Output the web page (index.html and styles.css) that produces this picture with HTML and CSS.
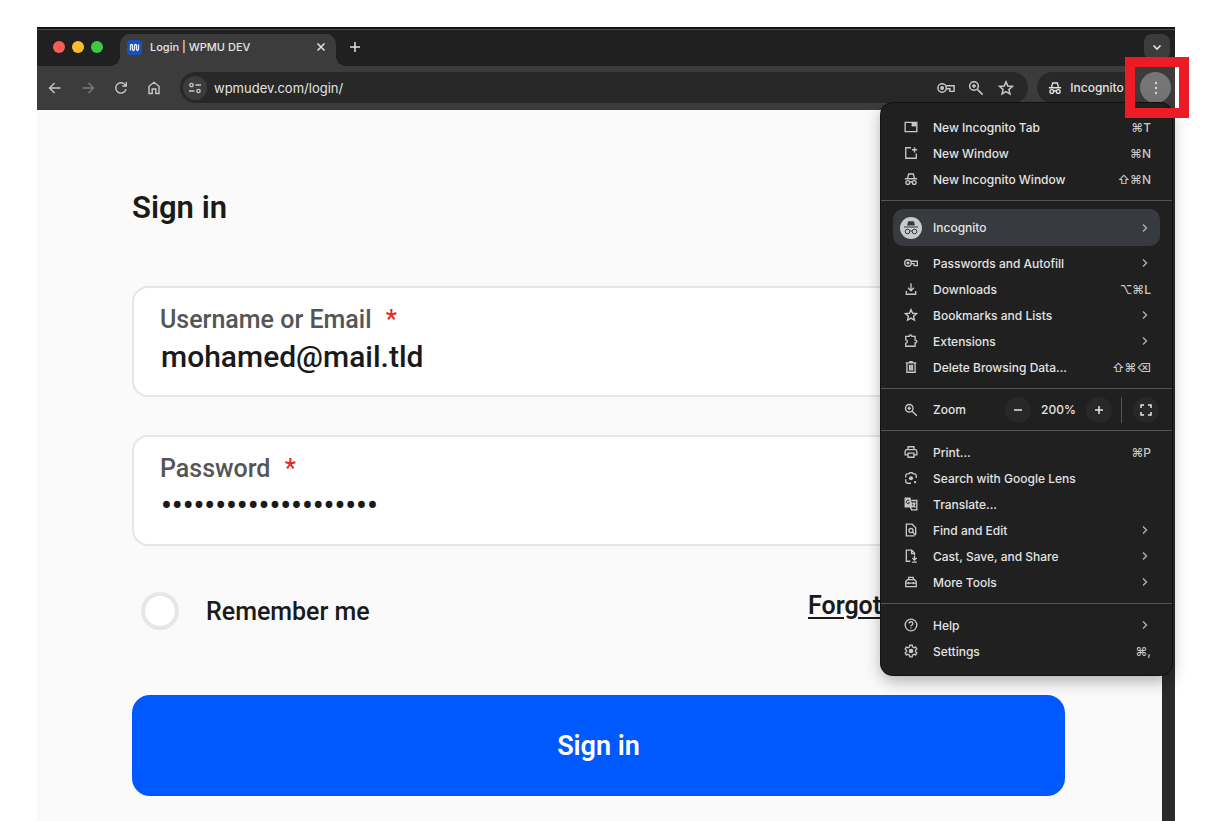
FILE: index.html
```html
<!DOCTYPE html>
<html lang="en">
<head>
<meta charset="utf-8">
<title>Login | WPMU DEV</title>
<link rel="stylesheet" href="styles.css">
</head>
<body>
<svg class="defs" aria-hidden="true">
  <symbol id="i-incognito" viewBox="0 0 24 24"><path d="M6 11 8 3.500h8L18 11M1.500 11.500h21"/><circle cx="6.500" cy="18" r="3.200"/><circle cx="17.500" cy="18" r="3.200"/><path d="M9.700 17.500q2.300-1.500 4.600 0"/></symbol>
  <symbol id="i-key" viewBox="0 0 24 24"><circle cx="6.800" cy="12" r="5.600"/><circle class="solid" cx="6.800" cy="12" r="2.600"/><path d="M12 9h10.800v7.500h-5.600V13h-4.800"/></symbol>
  <symbol id="i-zoom" viewBox="0 0 24 24"><circle cx="9" cy="9" r="6.500"/><path d="m14 14 8 8M9 6v6M6 9h6"/></symbol>
  <symbol id="i-star" viewBox="0 0 24 24"><path d="m12 2.800 2.700 6.200 6.800.6-5.100 4.500 1.500 6.700L12 17.300l-5.900 3.500 1.500-6.700-5.100-4.500 6.800-.6z"/></symbol>
  <symbol id="i-chevron" viewBox="0 0 12 12"><path d="m4 2.500 3.500 3.500L4 9.500"/></symbol>
</svg>

<div class="window">
  <header class="tabstrip">
    <div class="lights"><span class="light red"></span><span class="light yellow"></span><span class="light green"></span></div>
    <div class="tab">
      <svg class="favicon" viewBox="0 0 15 15"><rect width="15" height="15" rx="3" fill="#1b50b8"/><path d="M3.500 10.500V6q0-1.500 1-1.500t1 1.500v3q0 1.500 1 1.500t1-1.500V6q0-1.500 1-1.500t1 1.500v3q0 1.500 1 1.500t1-1.500V4.500" fill="none" stroke="#e8eefc" stroke-width="1.300"/></svg>
      <span class="tab-title">Login | WPMU DEV</span>
      <button class="plain" aria-label="Close tab"><svg class="icon s12" viewBox="0 0 12 12"><path d="m2.500 2.500 7 7m0-7-7 7" stroke-width="1.500"/></svg></button>
    </div>
    <button class="plain new-tab" aria-label="New tab"><svg class="icon s12" viewBox="0 0 12 12"><path d="M6 1v10M1 6h10"/></svg></button>
    <button class="plain tab-search" aria-label="Search tabs"><svg class="icon s12" viewBox="0 0 12 12"><path d="m2.500 4.500 3.500 3.500 3.500-3.500" stroke-width="1.700"/></svg></button>
  </header>

  <nav class="toolbar">
    <button class="plain nav" aria-label="Back"><svg class="icon s16" viewBox="0 0 16 16"><path d="M13.500 8H3M7.500 3 2.500 8l5 5"/></svg></button>
    <button class="plain nav dim" aria-label="Forward"><svg class="icon s16" viewBox="0 0 16 16"><path d="M2.500 8H13M8.500 3l5 5-5 5"/></svg></button>
    <button class="plain nav" aria-label="Reload"><svg class="icon s16" viewBox="0 0 16 16"><path d="M13 9.200A5.200 5.200 0 1 1 11.800 4.400L13 5.600M13.300 2v4H9.300"/></svg></button>
    <button class="plain nav" aria-label="Home"><svg class="icon s16" viewBox="0 0 16 16"><path d="M3 13.500V6.300l5-4 5 4v7.200H9.800V9H6.200v4.500z"/></svg></button>
    <div class="omnibox">
      <button class="plain site-info" aria-label="Site information"><svg class="icon s14" viewBox="0 0 14 14"><circle cx="3.500" cy="4" r="1.700"/><path d="M7.500 4H13M1 10h5.500"/><circle cx="10.500" cy="10" r="1.700"/></svg></button>
      <input class="url" type="text" aria-label="Address" value="wpmudev.com/login/">
      <button class="plain action" aria-label="Passwords"><svg class="icon s18"><use href="#i-key"/></svg></button>
      <button class="plain action" aria-label="Zoom level"><svg class="icon s16"><use href="#i-zoom"/></svg></button>
      <button class="plain action" aria-label="Bookmark this tab"><svg class="icon s16"><use href="#i-star"/></svg></button>
    </div>
    <button class="plain profile"><svg class="icon s14"><use href="#i-incognito"/></svg>Incognito</button>
    <div class="menu-anchor">
      <button class="plain kebab" aria-label="Customize and control"><svg class="dots" viewBox="0 0 16 16"><circle cx="8" cy="3" r="1.200"/><circle cx="8" cy="8" r="1.200"/><circle cx="8" cy="13" r="1.200"/></svg></button>

      <div class="menu">
        <button class="item"><svg class="icon s14" viewBox="0 0 24 24"><path d="M2 4h20v16H2z"/><path class="solid" d="M13 5h8v6h-8z"/></svg><span>New Incognito Tab</span><kbd>⌘T</kbd></button>
        <button class="item"><svg class="icon s14" viewBox="0 0 24 24"><path d="M12 3H3v18h18v-8M18 2v9M13.500 6.500h9"/></svg><span>New Window</span><kbd>⌘N</kbd></button>
        <button class="item"><svg class="icon s14"><use href="#i-incognito"/></svg><span>New Incognito Window</span><kbd>⇧⌘N</kbd></button>
        <hr>
        <button class="item account"><svg class="avatar" viewBox="0 0 22 22"><circle cx="11" cy="11" r="11" fill="#c7c9ca"/><path d="M7 8.500 8.200 4.300h5.600L15 8.500z" fill="#36393c"/><g fill="none" stroke="#36393c"><path d="M4 10h14"/><circle cx="7.500" cy="14.500" r="2.300"/><circle cx="14.500" cy="14.500" r="2.300"/><path d="M9.800 14.200q1.200-.7 2.400 0"/></g></svg><span>Incognito</span><svg class="icon chevron"><use href="#i-chevron"/></svg></button>
        <button class="item"><svg class="icon s14"><use href="#i-key"/></svg><span>Passwords and Autofill</span><svg class="icon chevron"><use href="#i-chevron"/></svg></button>
        <button class="item"><svg class="icon s14" viewBox="0 0 24 24"><path d="M12 2v13M7 10l5 5 5-5M4 15.500V21h16v-5.500"/></svg><span>Downloads</span><kbd>⌥⌘L</kbd></button>
        <button class="item"><svg class="icon s14"><use href="#i-star"/></svg><span>Bookmarks and Lists</span><svg class="icon chevron"><use href="#i-chevron"/></svg></button>
        <button class="item"><svg class="icon s14" viewBox="0 0 24 24"><path d="M3 4h6q0-2.500 2.200-2.500T13.500 4H19v6.500q3 0 3 2.500t-3 2.500V21H3v-5q2.800-.5 2.800-3T3 10z"/></svg><span>Extensions</span><svg class="icon chevron"><use href="#i-chevron"/></svg></button>
        <button class="item"><svg class="icon s14" viewBox="0 0 24 24"><path d="M3 5h18M9 3h6M5 5v16h14V5M9.500 8v10M12 8v10M14.500 8v10"/></svg><span>Delete Browsing Data...</span><kbd>⇧⌘⌫</kbd></button>
        <hr>
        <div class="zoom-row">
          <svg class="icon s14"><use href="#i-zoom"/></svg>
          <span class="zoom-label">Zoom</span>
          <button class="plain round" aria-label="Zoom out"><svg class="icon s12" viewBox="0 0 12 12"><path d="M2 6h8"/></svg></button>
          <span class="zoom-value">200%</span>
          <button class="plain round" aria-label="Zoom in"><svg class="icon s12" viewBox="0 0 12 12"><path d="M2 6h8M6 2v8"/></svg></button>
          <span class="divider"></span>
          <button class="plain round" aria-label="Full screen"><svg class="icon s12" viewBox="0 0 12 12"><path d="M1 4V1h3M8 1h3v3M11 8v3H8M4 11H1V8"/></svg></button>
        </div>
        <hr>
        <button class="item"><svg class="icon s14" viewBox="0 0 24 24"><path d="M7 8V3h10v5M7 17H2V11q0-3 3-3h14q3 0 3 3v6h-5M7 14h10v7H7z"/></svg><span>Print...</span><kbd>⌘P</kbd></button>
        <button class="item"><svg class="icon s14" viewBox="0 0 24 24"><path d="M3 11V8q0-3 3-3h2l2-2h4l2 2h2q3 0 3 3v4M3 14v3q0 4 4 4h5"/><circle class="solid" cx="12" cy="12.500" r="3.500"/><circle class="solid" cx="19" cy="19" r="2"/></svg><span>Search with Google Lens</span></button>
        <button class="item"><svg class="icon s14" viewBox="0 0 24 24"><path class="solid" d="M1 1h10l4.500 17H1z"/><path d="M13 6h9v16H13l-2-5M14 11h6M17 9v2M19 11q-1 4-4 6M15.500 13l4 5"/><path class="cut" d="M9 6.500A3 3 0 1 0 9.500 10H7"/></svg><span>Translate...</span></button>
        <button class="item"><svg class="icon s14" viewBox="0 0 24 24"><path d="M20 20V8l-6-6H4v20h14"/><circle cx="12" cy="13" r="3.500"/><path d="m14.500 15.500 5.500 5.500"/></svg><span>Find and Edit</span><svg class="icon chevron"><use href="#i-chevron"/></svg></button>
        <button class="item"><svg class="icon s14" viewBox="0 0 24 24"><path d="M11 21H4V2h9l5 5v4M13 2v6h5M18 12v7M14.500 15.500 18 19l3.500-3.500M14 22.500h8"/></svg><span>Cast, Save, and Share</span><svg class="icon chevron"><use href="#i-chevron"/></svg></button>
        <button class="item"><svg class="icon s14" viewBox="0 0 24 24"><path d="M8 8V4h8v4M3 20v-9l3-3h12l3 3v9zM3 14h18M8 12v4M16 12v4"/></svg><span>More Tools</span><svg class="icon chevron"><use href="#i-chevron"/></svg></button>
        <hr>
        <button class="item"><svg class="icon s14" viewBox="0 0 24 24"><circle cx="12" cy="12" r="10"/><path d="M8.800 9.500q0-3 3.200-3t3.200 2.800q0 1.500-1.700 2.700T12 14.500M12 16.200v2"/></svg><span>Help</span><svg class="icon chevron"><use href="#i-chevron"/></svg></button>
        <button class="item"><svg class="icon s14" viewBox="0 0 24 24"><path d="m10 2-.6 3-2.500 1.400-2.900-1-2 3.500 2.300 2v2.300L2 15.100l2 3.500 2.900-1L9.400 19l.6 3h4l.6-3 2.500-1.400 2.900 1 2-3.500-2.300-1.900v-2.300l2.300-2-2-3.500-2.900 1L14.600 5 14 2z"/><circle class="solid" cx="12" cy="12" r="4"/></svg><span>Settings</span><kbd>⌘,</kbd></button>
      </div>
      <div class="highlight"></div>
    </div>
  </nav>

  <div class="viewport">
    <main class="page">
      <h1>Sign in</h1>
      <form>
        <div class="field">
          <label for="user">Username or Email <span class="required">*</span></label>
          <input id="user" type="text" value="mohamed@mail.tld">
        </div>
        <div class="field">
          <label for="pass">Password <span class="required">*</span></label>
          <input id="pass" type="password" value="abcdefghijklmnopqrst">
        </div>
        <div class="options">
          <label class="remember"><input type="checkbox">Remember me</label>
          <a class="forgot" href="#">Forgot</a>
        </div>
        <button class="submit" type="button">Sign in</button>
      </form>
    </main>
    <div class="scrollbar"></div>
  </div>
</div>
</body>
</html>
```
FILE: styles.css
```css
* { box-sizing: border-box; }

body {
  margin: 0;
  min-height: 100vh;
  display: flex;
  padding: 27px 45px 0 37px;
  background: #fff;
  font-family: Inter, "Liberation Sans", sans-serif;
}

button, input { font: inherit; color: inherit; }
.defs { position: absolute; width: 0; height: 0; }

.icon {
  flex: none;
  fill: none;
  stroke: currentColor;
  stroke-width: 2.3;
  overflow: visible;
}
.icon[viewBox="0 0 16 16"] { stroke-width: 1.4; }
.icon[viewBox="0 0 14 14"] { stroke-width: 1.3; }
.icon[viewBox="0 0 12 12"] { stroke-width: 1.5; }
.s12 { width: 12px; height: 12px; }
.s14 { width: 14px; height: 14px; }
.s16 { width: 16px; height: 16px; }
.s18 { width: 18px; height: 18px; stroke-width: 1.9; }
.solid { fill: currentColor; stroke: none; }
.cut { stroke: #202020; stroke-width: 1.6; }

.plain {
  display: flex;
  align-items: center;
  justify-content: center;
  padding: 0;
  border: 0;
  background: none;
}

.window {
  flex: 1;
  min-width: 0;
  display: flex;
  flex-direction: column;
  color: #e3e3e3;
}

/* Tab strip */
.tabstrip {
  display: flex;
  align-items: flex-end;
  height: 39px;
  padding-right: 5px;
  background: #202020;
  border-top: 2px solid #151613;
  box-shadow: inset 0 1px #4b4b4b;
}
.lights { display: flex; gap: 7px; padding: 0 17px 13px 16px; }
.light { width: 12px; height: 12px; border-radius: 50%; }
.red { background: #fa5d56; }
.yellow { background: #fbbd2e; }
.green { background: #3fc844; }
.tab {
  position: relative;
  display: flex;
  align-items: center;
  width: 216px;
  height: 32px;
  padding: 0 9px 6px 7px;
  border-radius: 10px 10px 0 0;
  background: #3c3c3c;
}
.tab::before, .tab::after {
  content: "";
  position: absolute;
  bottom: 0;
  width: 10px;
  height: 10px;
}
.tab::before { right: 100%; background: radial-gradient(circle at 0 0, transparent 10px, #3c3c3c 10px); }
.tab::after { left: 100%; background: radial-gradient(circle at 100% 0, transparent 10px, #3c3c3c 10px); }
.favicon { width: 15px; height: 15px; margin-right: 8px; }
.tab-title { flex: 1; font-size: 11px; font-weight: 500; white-space: nowrap; }
.new-tab { height: 26px; width: 26px; margin: 0 auto 6px 6px; }
.tab-search { height: 26px; width: 26px; margin-bottom: 6px; border-radius: 8px; background: #3c3c3c; }

/* Toolbar */
.toolbar {
  display: flex;
  align-items: center;
  height: 44px;
  padding: 0 4px 1px 1px;
  background: #3c3c3c;
  color: #c7c7c7;
}
.nav { width: 33px; height: 31px; }
.dim { color: #7c7c7c; }
.omnibox {
  flex: 1;
  display: flex;
  align-items: center;
  height: 31px;
  margin: 0 9px 0 10px;
  padding: 0 7px 0 3px;
  border-radius: 16px;
  background: #282828;
}
.site-info { width: 24px; height: 24px; border-radius: 50%; background: #3c3c3c; }
.url {
  flex: 1;
  min-width: 0;
  padding: 0 0 0 7px;
  border: 0;
  background: none;
  color: #e3e3e3;
  font-size: 13px;
}
.action { width: 30px; height: 30px; }
.profile {
  width: 94px;
  height: 31px;
  gap: 8px;
  margin-right: 9px;
  border-radius: 16px 0 0 16px;
  padding-left: 4px;
  background: #282828;
  color: #e3e3e3;
  font-size: 12px;
  font-weight: 500;
}
.menu-anchor { position: relative; }
.kebab { width: 31px; height: 31px; border-radius: 50%; background: #757575; }
.dots { width: 16px; height: 16px; fill: #d5d5d5; }
.highlight {
  position: absolute;
  z-index: 3;
  top: -15px;
  left: -15px;
  width: 64px;
  height: 61px;
  border: 10px solid #ed1c24;
  pointer-events: none;
}

/* Application menu */
.menu {
  position: absolute;
  z-index: 2;
  top: 31px;
  right: -1px;
  width: 291px;
  padding: 11px 0;
  border-radius: 12px;
  background: #202020;
  box-shadow: 0 0 0 1px #111, 0 6px 16px rgba(0, 0, 0, .3);
  color: #e3e3e3;
  font-size: 12px;
  font-weight: 500;
}
.menu hr { margin: 8px 0; border: 0; border-top: 1px solid #555; }
.item {
  display: flex;
  align-items: center;
  width: 100%;
  height: 26px;
  padding: 0 21px 0 23px;
  gap: 15px;
  border: 0;
  background: none;
  text-align: left;
}
.item span { flex: 1; white-space: nowrap; }
.item .s14, .zoom-row > .s14 { color: #c7c7c7; }
.item kbd { font: inherit; color: #c7c7c7; }
.chevron { width: 12px; height: 12px; stroke-width: 1.4; color: #b0b0b0; }
.account {
  width: calc(100% - 24px);
  height: 37px;
  margin: 0 12px 4px;
  padding: 0 9px 0 7px;
  gap: 11px;
  border-radius: 10px;
  background: #373a3e;
}
.avatar { width: 22px; height: 22px; }
.zoom-row {
  display: flex;
  align-items: center;
  height: 41px;
  margin: -8px 0;
  padding: 0 13px 0 23px;
}
.zoom-label { flex: 1; padding-left: 15px; }
.round { width: 26px; height: 26px; border-radius: 50%; background: #282828; }
.zoom-value { width: 55px; text-align: center; }
.divider { width: 1px; height: 26px; margin: 0 11px 0 9px; background: #555; }

/* Login page */
.viewport { flex: 1; display: flex; }
.scrollbar { width: 13px; background: #2b2b2b; }
.page {
  flex: 1;
  min-width: 0;
  padding: 80px 97px 24px 95px;
  background: #fafafa;
  color: #1a1a1a;
  font-family: Roboto, "Liberation Sans", sans-serif;
  font-weight: 500;
}
h1 { margin: 0 0 60px; font-size: 31px; line-height: 36px; font-weight: 600; }
.field {
  margin-bottom: 38px;
  padding: 18px 26px 21px;
  border: 2px solid #e6e6e6;
  border-radius: 16px;
  background: #fff;
}
.field label {
  display: block;
  margin-bottom: 4px;
  color: #555;
  font-size: 25px;
  line-height: 28px;
}
.required { margin-left: 8px; color: #e8242b; }
.field input {
  display: block;
  width: 100%;
  height: 36px;
  padding: 0 0 0 1px;
  border: 0;
  outline: 0;
  background: none;
  font-size: 30px;
}
.field input[type="password"] { font-size: 31px; }
.options {
  display: flex;
  justify-content: space-between;
  align-items: flex-start;
  margin: 46px 0 65px;
  font-size: 25px;
}
.remember { display: flex; align-items: center; gap: 27px; padding-left: 9px; }
.remember input {
  appearance: none;
  width: 38px;
  height: 38px;
  margin: 0;
  border: 4px solid #e6e6e6;
  border-radius: 50%;
  background: #fff;
}
.forgot {
  width: 257px;
  color: inherit;
  font-weight: 600;
  line-height: 28px;
  text-underline-offset: 3px;
}
.submit {
  display: block;
  width: 100%;
  height: 101px;
  border: 0;
  border-radius: 18px;
  background: #0059ff;
  color: #fff;
  font-size: 27px;
  font-weight: 600;
}
```
